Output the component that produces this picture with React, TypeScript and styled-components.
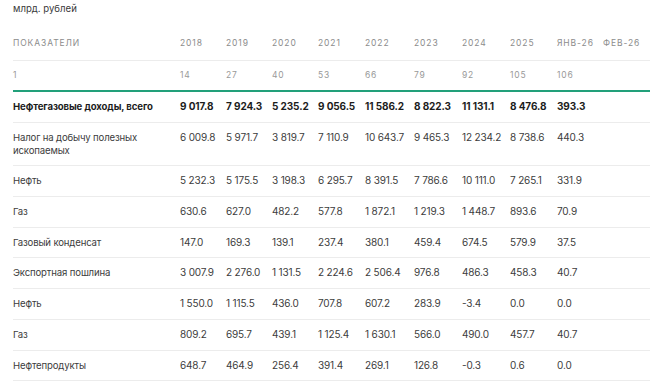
import React from "react";
import styled, { createGlobalStyle } from "styled-components";

const Global = createGlobalStyle`
  html, body { margin: 0; padding: 0; background: #ffffff; }
  body { font-family: Inter, "Noto Sans", sans-serif; color: #333; }
`;

const Page = styled.div`
  padding: 2px 6px 0 13px;
`;

const Caption = styled.div`
  font-size: 9.6px;
  line-height: 14px;
  color: #3a3a3a;
  margin-bottom: 11px;
`;

const Table = styled.table`
  width: 637px;
  border-collapse: collapse;
  table-layout: fixed;
`;

const Col = styled.col<{ $w: number }>`
  width: ${(p) => p.$w}px;
`;

const HeadCell = styled.th`
  text-align: left;
  font-weight: 400;
  font-size: 8.5px;
  letter-spacing: 0.9px;
  text-transform: uppercase;
  color: #8c8c8c;
  line-height: 13px;
  padding: 10px 0 10px 0;
  border-bottom: 1px solid #ececec;
  white-space: nowrap;
`;

const IndexCell = styled.td`
  font-size: 8.5px;
  letter-spacing: 0.8px;
  color: #999;
  line-height: 13px;
  padding: 8px 0 8px 0;
  border-bottom: 2px solid #22a07a;
`;

const Row = styled.tr<{ $bold?: boolean }>`
  & > td {
    font-size: 10px;
    line-height: 13px;
    padding: 8px 0 8.7px 0;
    vertical-align: top;
    border-bottom: 1px solid #ececec;
    color: ${(p) => (p.$bold ? "#1c1c1c" : "#3c3c3c")};
    font-weight: ${(p) => (p.$bold ? 700 : 400)};
    white-space: nowrap;
    letter-spacing: ${(p) => (p.$bold ? "-0.1px" : "-0.15px")};
  }
`;

const LabelCell = styled.td`
  && {
    white-space: normal;
    padding-right: 18px;
    font-size: 9.6px;
  }
`;

const widths = [167, 46, 46, 46, 47, 49, 48, 48, 47, 46, 47];
const headers = ["Показатели", "2018", "2019", "2020", "2021", "2022", "2023", "2024", "2025", "янв-26", "фев-26"];
const indexRow = ["1", "14", "27", "40", "53", "66", "79", "92", "105", "106", ""];

type R = { label: string; bold?: boolean; values: string[] };
const rows: R[] = [
  { label: "Нефтегазовые доходы, всего", bold: true, values: ["9 017.8", "7 924.3", "5 235.2", "9 056.5", "11 586.2", "8 822.3", "11 131.1", "8 476.8", "393.3", ""] },
  { label: "Налог на добычу полезных ископаемых", values: ["6 009.8", "5 971.7", "3 819.7", "7 110.9", "10 643.7", "9 465.3", "12 234.2", "8 738.6", "440.3", ""] },
  { label: "Нефть", values: ["5 232.3", "5 175.5", "3 198.3", "6 295.7", "8 391.5", "7 786.6", "10 111.0", "7 265.1", "331.9", ""] },
  { label: "Газ", values: ["630.6", "627.0", "482.2", "577.8", "1 872.1", "1 219.3", "1 448.7", "893.6", "70.9", ""] },
  { label: "Газовый конденсат", values: ["147.0", "169.3", "139.1", "237.4", "380.1", "459.4", "674.5", "579.9", "37.5", ""] },
  { label: "Экспортная пошлина", values: ["3 007.9", "2 276.0", "1 131.5", "2 224.6", "2 506.4", "976.8", "486.3", "458.3", "40.7", ""] },
  { label: "Нефть", values: ["1 550.0", "1 115.5", "436.0", "707.8", "607.2", "283.9", "-3.4", "0.0", "0.0", ""] },
  { label: "Газ", values: ["809.2", "695.7", "439.1", "1 125.4", "1 630.1", "566.0", "490.0", "457.7", "40.7", ""] },
  { label: "Нефтепродукты", values: ["648.7", "464.9", "256.4", "391.4", "269.1", "126.8", "-0.3", "0.6", "0.0", ""] },
];

export default function App() {
  return (
    <Page>
      <Global />
      <Caption>млрд. рублей</Caption>
      <Table>
        <colgroup>
          {widths.map((w, i) => (
            <Col key={i} $w={w} />
          ))}
        </colgroup>
        <thead>
          <tr>
            {headers.map((h, i) => (
              <HeadCell key={i}>{h}</HeadCell>
            ))}
          </tr>
        </thead>
        <tbody>
          <tr>
            {indexRow.map((v, i) => (
              <IndexCell key={i}>{v}</IndexCell>
            ))}
          </tr>
          {rows.map((r, i) => (
            <Row key={i} $bold={r.bold}>
              <LabelCell>{r.label}</LabelCell>
              {r.values.map((v, j) => (
                <td key={j}>{v}</td>
              ))}
            </Row>
          ))}
        </tbody>
      </Table>
    </Page>
  );
}
